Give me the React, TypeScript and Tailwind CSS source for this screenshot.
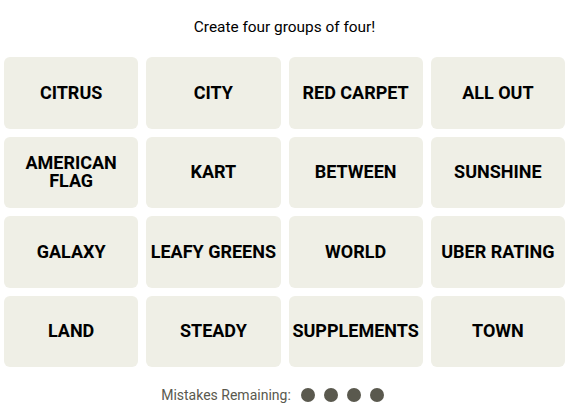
const words = [
  'CITRUS', 'CITY', 'RED CARPET', 'ALL OUT',
  'AMERICAN FLAG', 'KART', 'BETWEEN', 'SUNSHINE',
  'GALAXY', 'LEAFY GREENS', 'WORLD', 'UBER RATING',
  'LAND', 'STEADY', 'SUPPLEMENTS', 'TOWN',
];

export default function App() {
  return (
    <div className="w-[569px] h-[407px] bg-white font-['Roboto',sans-serif] text-black">
      <p className="pt-[15px] text-center text-[15.4px] leading-[24px]">Create four groups of four!</p>

      <div className="mt-[18px] px-[4px] grid grid-cols-4 gap-[8px]">
        {words.map((w) => (
          <button
            key={w}
            className="h-[71.5px] rounded-[6px] bg-[#efefe6] flex items-center justify-center px-1 text-center text-[18px] leading-[18px] font-bold uppercase"
          >
            {w}
          </button>
        ))}
      </div>

      <div className="mt-[18px] pr-[24px] flex items-center justify-center gap-[10px]">
        <span className="text-[14px] leading-[20px] text-[#5a594e]">Mistakes Remaining:</span>
        <div className="flex gap-[9px]">
          {[0, 1, 2, 3].map((i) => (
            <span key={i} className="w-[14px] h-[14px] rounded-full bg-[#5a594e]" />
          ))}
        </div>
      </div>
    </div>
  );
}
